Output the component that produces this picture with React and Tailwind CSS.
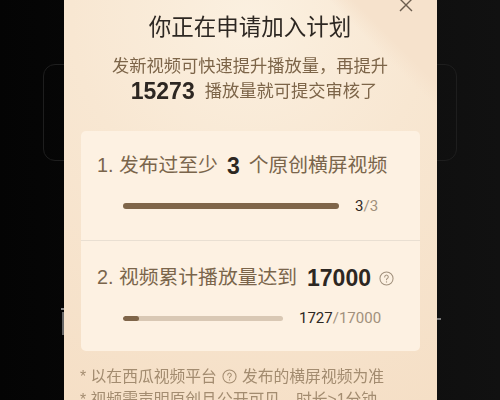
const Q = ({ className }) => (
  <svg viewBox="0 0 16 16" fill="none" className={className}>
    <circle cx="8" cy="8" r="7" stroke="currentColor" strokeWidth="1.1" />
    <path d="M6.1 6.3a1.9 1.9 0 1 1 2.9 1.6c-.6.4-1 .8-1 1.5" stroke="currentColor" strokeWidth="1.1" strokeLinecap="round" />
    <circle cx="8" cy="11.6" r=".7" fill="currentColor" />
  </svg>
);

export default function App() {
  return (
    <div
      className="relative w-[500px] h-[400px] overflow-hidden bg-[linear-gradient(90deg,#040404,#111111)] flex justify-center"
      style={{ fontFamily: '"Liberation Sans", "Noto Sans CJK SC", sans-serif' }}
    >
      <div className="absolute left-[43px] top-[64px] w-[414px] h-[97px] rounded-[12px] border border-[#1e1e1e]" />
      <div className="absolute left-[62px] top-[312px] w-[2px] h-[23px] bg-[#666666]" />
      <div className="absolute left-[61px] top-[308px] w-[3px] h-[2px] bg-[#888888]" />
      <div className="absolute left-[437px] top-[318px] w-[4px] h-[2px] bg-[#777777]" />
      <div className="relative z-10 w-[373px] h-[400px] ml-[1px] overflow-hidden pl-[16px] pr-[17px] pt-[11px] flex flex-col bg-[radial-gradient(circle_at_50%_4%,#fbf0e0_0%,#f8e7d2_42%,#f5dfc6_100%)] blur-[0.3px]">
        <div className="absolute right-0 top-0 w-[160px] h-[160px] bg-[linear-gradient(45deg,transparent_66%,#f6e2cc_74%)]" />
        <svg viewBox="0 0 14 14" className="absolute right-[24px] top-[-2px] w-[14px] h-[14px] text-[#6b5d4e]" fill="none">
          <path d="M1 1l12 12M13 1L1 13" stroke="currentColor" strokeWidth="1.4" />
        </svg>
        <div className="relative text-center text-[22.5px] leading-[34px] text-[#2d2722]">你正在申请加入计划</div>
        <div className="relative mt-[9px] text-center text-[17.25px] leading-[25px] text-[#7d6549]">
          <div>发新视频可快速提升播放量，再提升</div>
          <div className="flex items-center justify-center h-[24px] pl-[8px]">
            <span className="font-bold text-[23px] text-[#2d2722] mr-[10px]">15273</span>
            <span>播放量就可提交审核了</span>
          </div>
        </div>
        <div className="relative mt-[28px] ml-[1px] rounded-[5px] bg-[#fdf1e2]">
          <div className="h-[110px] border-b border-[#e9dfd2] pt-[21px] pl-[16px]">
            <div className="flex items-center h-[28px] text-[19.8px] text-[#7a654b]">
              <span>1. 发布过至少</span>
              <span className="font-bold text-[#2d2722] mx-[9px] text-[23px]">3</span>
              <span>个原创横屏视频</span>
            </div>
            <div className="flex items-center mt-[16px] ml-[26px]">
              <div className="w-[216px] h-[6px] rounded-full bg-[#7f6549]" />
              <div className="ml-[16px] text-[15px] leading-[20px] text-[#2d2722]" style={{ fontFamily: "Roboto, sans-serif" }}>
                3<span className="text-[#a1907c]">/3</span>
              </div>
            </div>
          </div>
          <div className="h-[110px] pt-[23px] pl-[16px]">
            <div className="flex items-center h-[28px] text-[19.8px] text-[#7a654b]">
              <span>2. 视频累计播放量达到</span>
              <span className="font-bold text-[#2d2722] ml-[10px] text-[23px]">17000</span>
              <Q className="ml-[8px] w-[15px] h-[15px] text-[#a1907c]" />
            </div>
            <div className="flex items-center mt-[16px] ml-[26px]">
              <div className="w-[160px] h-[5px] rounded-full bg-[#d9c8b4] overflow-hidden">
                <div className="w-[16px] h-full rounded-full bg-[#7f6549]" />
              </div>
              <div className="ml-[16px] text-[15px] leading-[20px] text-[#2d2722]" style={{ fontFamily: "Roboto, sans-serif" }}>
                1727<span className="text-[#a1907c]">/17000</span>
              </div>
            </div>
          </div>
        </div>
        <div className="relative mt-[14px] text-[15.8px] leading-[23px] text-[#a38c70] whitespace-nowrap">
          <div className="flex items-center">
            <span>* 以在西瓜视频平台</span>
            <Q className="mx-[5px] w-[15px] h-[15px]" />
            <span>发布的横屏视频为准</span>
          </div>
          <div>* 视频需声明原创且公开可见，时长&gt;1分钟</div>
        </div>
      </div>
    </div>
  );
}
